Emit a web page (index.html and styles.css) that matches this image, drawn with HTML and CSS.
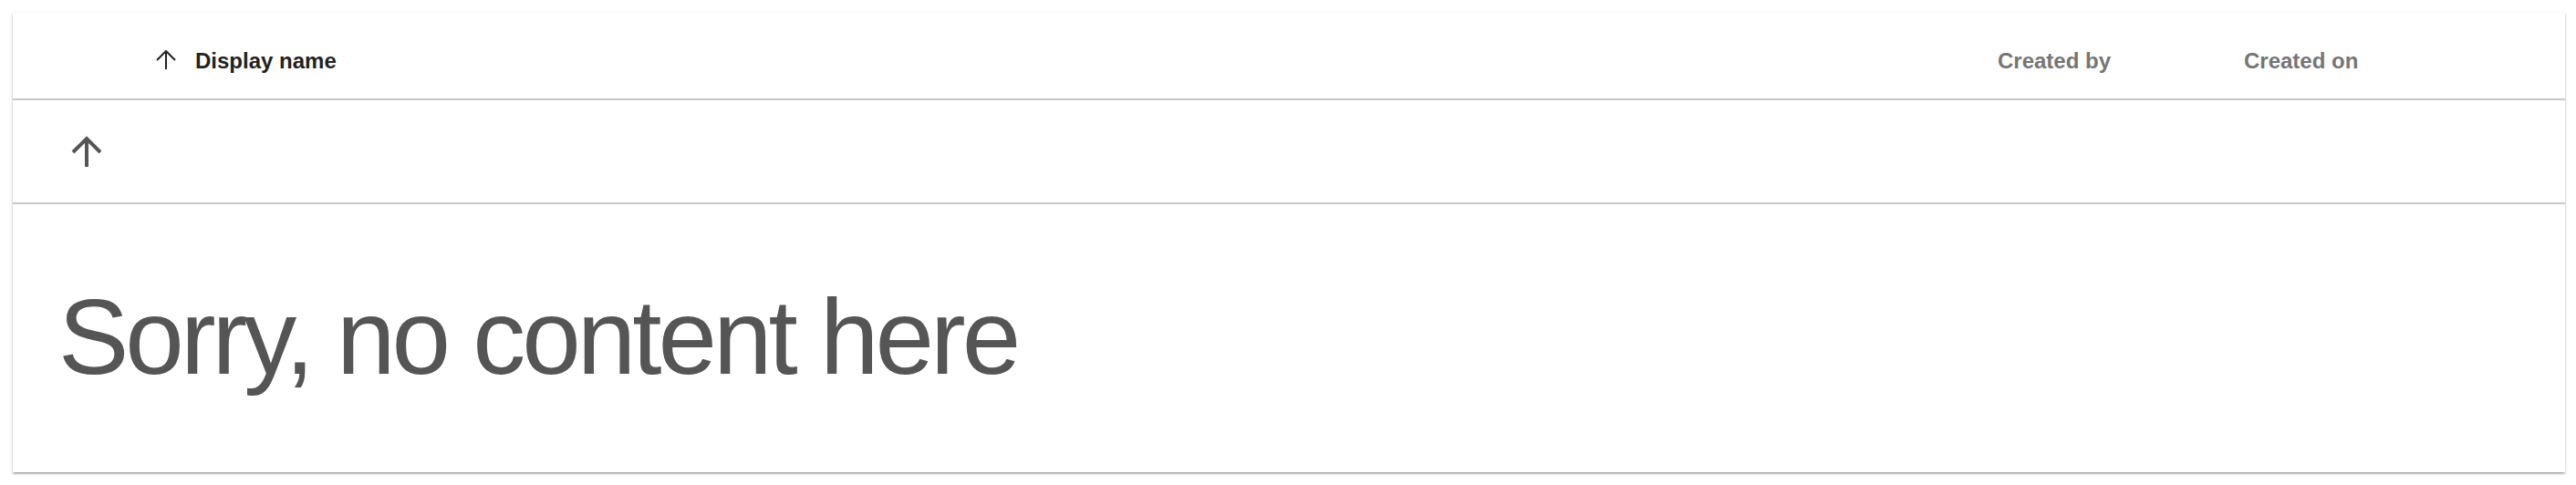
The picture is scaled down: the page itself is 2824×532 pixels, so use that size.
FILE: index.html
```html
<!DOCTYPE html>
<html lang="en">
<head>
<meta charset="utf-8">
<title>Empty list</title>
<link rel="stylesheet" href="styles.css">
</head>
<body>
<div class="card">
  <div class="header">
    <div class="col-name">
      <svg class="sort-icon" width="22" height="22" viewBox="0 0 22 22" aria-hidden="true">
        <polyline points="1,11 11,1 21,11" fill="none" stroke="#222" stroke-width="2"/>
        <line x1="11" y1="1" x2="11" y2="21" stroke="#222" stroke-width="2"/>
      </svg>
      <span class="head-label">Display name</span>
    </div>
    <div class="head-label muted">Created by</div>
    <div class="head-label muted">Created on</div>
  </div>
  <div class="up-row">
    <svg class="up-icon" width="34" height="34" viewBox="0 0 34 34" aria-hidden="true">
      <polyline points="2,18 17,3 32,18" fill="none" stroke="#555" stroke-width="4"/>
      <line x1="17" y1="3" x2="17" y2="34" stroke="#555" stroke-width="4"/>
    </svg>
  </div>
  <div class="empty">
    <div class="empty-text">Sorry, no content here</div>
  </div>
</div>
</body>
</html>
```
FILE: styles.css
```css
html, body {
  margin: 0;
  padding: 0;
  background: #ffffff;
}

body {
  font-family: "Liberation Sans", Arial, Helvetica, sans-serif;
  padding: 14px 12px 14px 14px;
}

.card {
  background: #ffffff;
  height: 504px;
  display: flex;
  flex-direction: column;
  box-shadow: 0 1px 3px rgba(0, 0, 0, 0.2), 0 2px 2px rgba(0, 0, 0, 0.16), 0 3px 1px -2px rgba(0, 0, 0, 0.12);
}

.header {
  box-sizing: border-box;
  height: 96px;
  border-bottom: 2px solid #c8c8c8;
  display: grid;
  grid-template-columns: 1fr 270px 352px;
  align-items: start;
  padding: 39px 0 0 157px;
}

.col-name {
  display: flex;
  align-items: center;
  gap: 21px;
}

.sort-icon {
  display: block;
  margin-top: -3px;
}

.head-label {
  font-size: 24px;
  font-weight: bold;
  line-height: 28px;
  color: #222222;
}

.muted {
  color: #757575;
}

.up-row {
  box-sizing: border-box;
  height: 114px;
  border-bottom: 2px solid #c8c8c8;
  display: flex;
  align-items: center;
  padding-left: 64px;
}

.up-icon {
  display: block;
}

.empty {
  flex: 1;
  padding: 88px 0 0 50px;
}

.empty-text {
  font-size: 116px;
  line-height: 116px;
  color: #555555;
  letter-spacing: -4px;
  white-space: nowrap;
}
```
